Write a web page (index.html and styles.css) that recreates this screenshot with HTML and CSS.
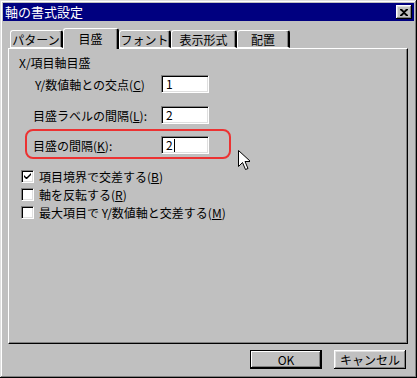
FILE: index.html
```html
<!DOCTYPE html>
<html lang="ja">
<head>
  <meta charset="UTF-8" />
  <title>軸の書式設定</title>
  <link rel="stylesheet" href="styles.css">
</head>
<body>
  <div class="window">
    <div class="titlebar">
      <span class="title">軸の書式設定</span>
      <div class="close-btn">
        <svg width="8" height="7" viewBox="0 0 8 7">
          <path d="M0 0h2l2 2 2-2h2v1l-3 2.5 3 2.5v1h-2l-2-2-2 2h-2v-1l3-2.5-3-2.5z" fill="#000"/>
        </svg>
      </div>
    </div>

    <div class="tabs">
      <div class="tab" style="width: 53px">パターン</div>
      <div class="tab active" style="width: 56px">目盛</div>
      <div class="tab" style="width: 52px">フォント</div>
      <div class="tab" style="width: 66px">表示形式</div>
      <div class="tab" style="width: 53px">配置</div>
    </div>

    <div class="panel">
      <div class="group-label">X/項目軸目盛</div>

      <div class="field first">
        <span class="field-label shift">Y/数値軸との交点(<u>C</u>)</span>
        <div class="textbox">1</div>
      </div>
      <div class="field second">
        <span class="field-label">目盛ラベルの間隔(<u>L</u>):</span>
        <div class="textbox">2</div>
      </div>
      <div class="field third">
        <span class="field-label">目盛の間隔(<u>K</u>):</span>
        <div class="textbox">2<span class="caret"></span></div>
      </div>

      <div class="highlight"></div>

      <div class="checks">
        <div class="check-row">
          <div class="checkbox">
            <svg width="9" height="9" viewBox="0 0 9 9">
              <path d="M1 3v2l2 2h1l4-4v-2l-4 4h-1z" fill="#000"/>
            </svg>
          </div>
          <span>項目境界で交差する(<u>B</u>)</span>
        </div>
        <div class="check-row">
          <div class="checkbox"></div>
          <span>軸を反転する(<u>R</u>)</span>
        </div>
        <div class="check-row">
          <div class="checkbox"></div>
          <span>最大項目で Y/数値軸と交差する(<u>M</u>)</span>
        </div>
      </div>
    </div>

    <div class="buttons">
      <div class="btn default">OK</div>
      <div class="btn">キャンセル</div>
    </div>

    <!-- mouse pointer -->
    <svg class="cursor" width="12" height="21" viewBox="0 0 12 21">
      <path d="M0.5 0.5v16l4-4 3 7 2.5-1-3-7h5.5z" fill="#fff" stroke="#000" stroke-width="1"/>
    </svg>
  </div>
</body>
</html>
```

FILE: styles.css
```css
body {
  margin: 0;
  font-family: "Noto Sans CJK JP", "MS UI Gothic", sans-serif;
  font-size: 12px;
  color: #000;
  background: #c0c0c0;
}

.window {
  position: relative;
  width: 417px;
  height: 378px;
  box-sizing: border-box;
  padding: 3px;
  background: #c0c0c0;
  box-shadow: inset -1px -1px #000, inset 1px 1px #dfdfdf,
              inset -2px -2px #808080, inset 2px 2px #fff;
}

/* title bar */
.titlebar {
  display: flex;
  align-items: center;
  justify-content: space-between;
  height: 18px;
  background: #000080;
  padding: 0 2px 0 2px;
}

.title {
  color: #fff;
  font-size: 13px;
  line-height: 18px;
}

.close-btn {
  width: 16px;
  height: 14px;
  box-sizing: border-box;
  display: flex;
  align-items: center;
  justify-content: center;
  background: #c0c0c0;
  box-shadow: inset -1px -1px #000, inset 1px 1px #fff,
              inset -2px -2px #808080, inset 2px 2px #dfdfdf;
}

/* tabs */
.tabs {
  display: flex;
  align-items: flex-end;
  margin: 7px 0 0 7px;
  height: 20px;
  position: relative;
  z-index: 1;
}

.tab {
  height: 18px;
  box-sizing: border-box;
  text-align: center;
  line-height: 17px;
  border-top: 1px solid #fff;
  border-left: 1px solid #fff;
  border-right: 2px solid #000;
  box-shadow: inset -1px 0 #808080;
  border-radius: 3px 3px 0 0;
  border-bottom: 1px solid #fff;
}

.tab.active {
  height: 21px;
  line-height: 19px;
  margin-bottom: -1px;
  border-bottom: none;
  background: #c0c0c0;
}

/* page */
.panel {
  position: relative;
  margin-left: 5px;
  width: 400px;
  height: 296px;
  box-sizing: border-box;
  border-top: 1px solid #fff;
  border-left: 1px solid #fff;
  border-right: 1px solid #000;
  border-bottom: 1px solid #000;
  box-shadow: inset -1px -1px #808080;
  padding-left: 10px;
}

.group-label {
  padding-top: 7px;
  line-height: 14px;
}

.field {
  display: flex;
  align-items: center;
  height: 18px;
  padding-left: 14px;
}

.field.first { margin-top: 5px; }
.field.second { margin-top: 13px; }
.field.third { margin-top: 12px; }

.field-label {
  width: 128px;
  white-space: nowrap;
}

.field-label.shift {
  padding-left: 2px;
  width: 126px;
}

.textbox {
  width: 48px;
  height: 18px;
  box-sizing: border-box;
  background: #fff;
  border-top: 1px solid #808080;
  border-left: 1px solid #808080;
  border-right: 1px solid #fff;
  border-bottom: 1px solid #fff;
  box-shadow: inset 1px 1px #000, inset -1px -1px #dfdfdf;
  padding-left: 4px;
  line-height: 16px;
  display: flex;
  align-items: center;
}

.caret {
  display: inline-block;
  width: 1px;
  height: 13px;
  background: #000;
  margin-left: 1px;
}

/* red annotation */
.highlight {
  position: absolute;
  left: 16px;
  top: 80px;
  width: 206px;
  height: 30px;
  box-sizing: border-box;
  border: 2px solid #ec3232;
  border-radius: 8px;
}

.checks {
  margin-top: 16px;
  padding-left: 2px;
}

.check-row {
  display: flex;
  align-items: center;
  height: 13px;
  margin-bottom: 5px;
  gap: 5px;
}

.checkbox {
  width: 13px;
  height: 13px;
  box-sizing: border-box;
  background: #fff;
  border-top: 1px solid #808080;
  border-left: 1px solid #808080;
  border-right: 1px solid #fff;
  border-bottom: 1px solid #fff;
  box-shadow: inset 1px 1px #000, inset -1px -1px #dfdfdf;
  display: flex;
  align-items: center;
  justify-content: center;
}

/* buttons */
.buttons {
  display: flex;
  justify-content: flex-end;
  gap: 12px;
  margin-top: 6px;
  padding-right: 8px;
}

.btn {
  width: 72px;
  height: 19px;
  box-sizing: border-box;
  text-align: center;
  line-height: 19px;
  background: #c0c0c0;
  box-shadow: inset -1px -1px #000, inset 1px 1px #fff,
              inset -2px -2px #808080, inset 2px 2px #dfdfdf;
}

.btn.default {
  border: 1px solid #000;
  line-height: 17px;
  box-shadow: inset -1px -1px #000, inset 1px 1px #fff,
              inset -2px -2px #808080;
}

.cursor {
  position: absolute;
  left: 238px;
  top: 150px;
}
```
